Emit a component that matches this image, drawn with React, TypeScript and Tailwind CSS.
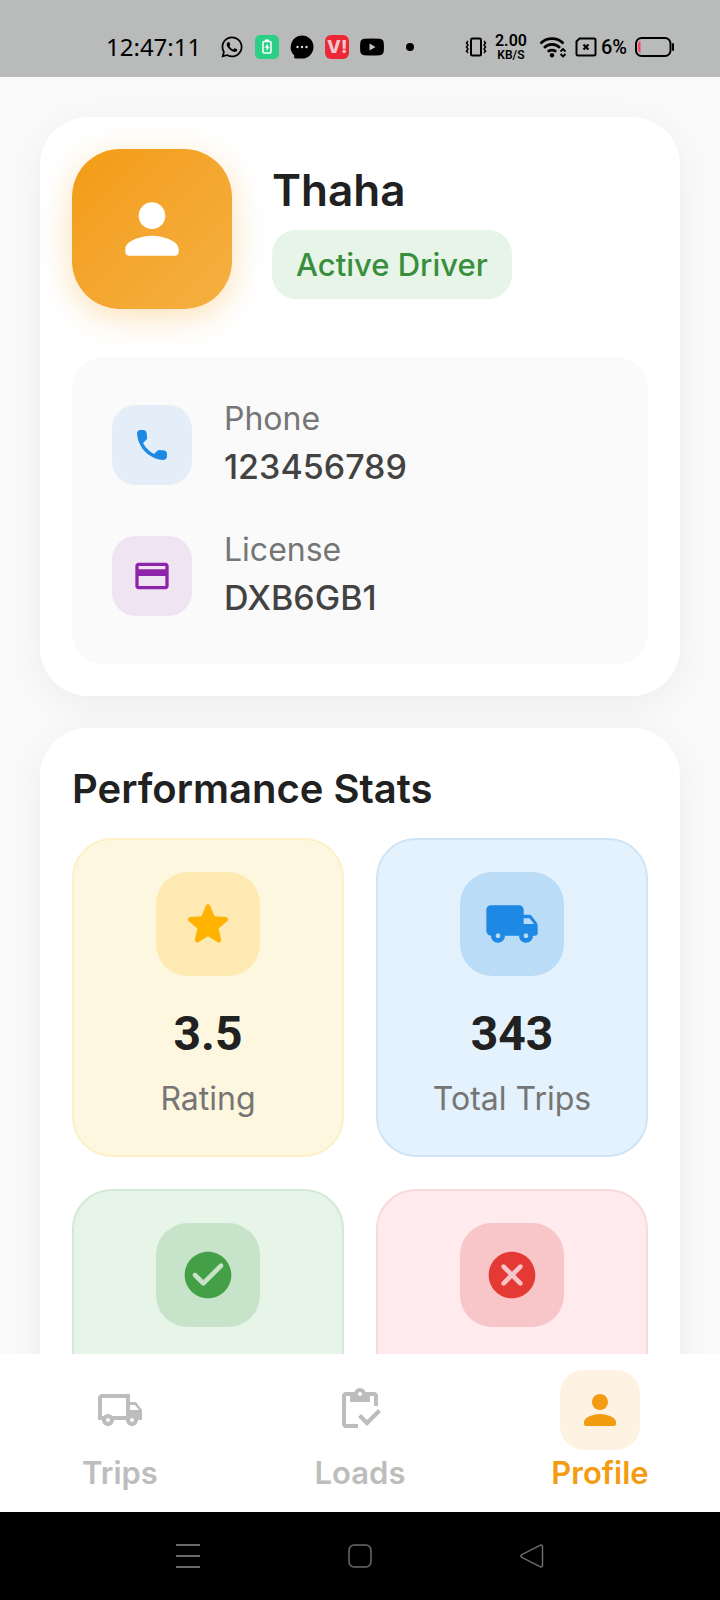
import type { ReactNode } from 'react';
import { FaWhatsapp } from 'react-icons/fa';
import { MdCreditCard, MdOutlineInventory, MdOutlineLocalShipping } from 'react-icons/md';

const ICONS = {
  person:
    'M12 12c2.21 0 4-1.79 4-4s-1.79-4-4-4-4 1.79-4 4 1.79 4 4 4zm0 2c-2.67 0-8 1.34-8 4v1c0 .55.45 1 1 1h14c.55 0 1-.45 1-1v-1c0-2.66-5.33-4-8-4z',
  phone:
    'M19.23 15.26l-2.54-.29c-.61-.07-1.21.14-1.64.57l-1.84 1.84c-2.83-1.44-5.15-3.75-6.59-6.59l1.85-1.85c.43-.43.64-1.03.57-1.64l-.29-2.52c-.12-1.01-.97-1.77-1.99-1.77H5.03c-1.13 0-2.07.94-2 2.07.53 8.54 7.36 15.36 15.89 15.89 1.13.07 2.07-.87 2.07-2v-1.73c.01-1.01-.75-1.86-1.76-1.98z',
  star:
    'M12 17.27l4.15 2.51c.76.46 1.69-.22 1.49-1.08l-1.1-4.72 3.67-3.18c.67-.58.31-1.68-.57-1.75l-4.83-.41-1.89-4.46c-.34-.81-1.5-.81-1.84 0L9.19 8.63l-4.83.41c-.88.07-1.24 1.17-.57 1.75l3.67 3.18-1.1 4.72c-.2.86.73 1.54 1.49 1.08l4.15-2.5z',
  truck:
    'M19.5 8H17V6c0-1.1-.9-2-2-2H3c-1.1 0-2 .9-2 2v9c0 1.1.9 2 2 2 0 1.66 1.34 3 3 3s3-1.34 3-3h6c0 1.66 1.34 3 3 3s3-1.34 3-3h1c.55 0 1-.45 1-1v-3.33c0-.43-.14-.85-.4-1.2L20.3 8.4c-.19-.25-.49-.4-.8-.4zM6 18c-.55 0-1-.45-1-1s.45-1 1-1 1 .45 1 1-.45 1-1 1zm13.5-8.5l1.96 2.5H17V9.5h2.5zM18 18c-.55 0-1-.45-1-1s.45-1 1-1 1 .45 1 1-.45 1-1 1z',
  check:
    'M12 2C6.48 2 2 6.48 2 12s4.48 10 10 10 10-4.48 10-10S17.52 2 12 2zM9.29 16.29L5.7 12.7c-.39-.39-.39-1.02 0-1.41.39-.39 1.02-.39 1.41 0L10 14.17l6.88-6.88c.39-.39 1.02-.39 1.41 0 .39.39.39 1.02 0 1.41l-7.59 7.59c-.38.39-1.02.39-1.41 0z',
  cancel:
    'M12 2C6.47 2 2 6.47 2 12s4.47 10 10 10 10-4.47 10-10S17.53 2 12 2zm4.3 14.3c-.39.39-1.02.39-1.41 0L12 13.41 9.11 16.3c-.39.39-1.02.39-1.41 0-.39-.39-.39-1.02 0-1.41L10.59 12 7.7 9.11c-.39-.39-.39-1.02 0-1.41.39-.39 1.02-.39 1.41 0L12 10.59l2.89-2.89c.39-.39 1.02-.39 1.41 0 .39.39.39 1.02 0 1.41L13.41 12l2.89 2.89c.38.38.38 1.02 0 1.41z',
};

function Icon({ name, className }: { name: keyof typeof ICONS; className: string }) {
  return (
    <svg viewBox="0 0 24 24" fill="currentColor" className={className} aria-hidden="true">
      <path d={ICONS[name]} />
    </svg>
  );
}

function StatusBar() {
  return (
    <header className="flex h-[77px] shrink-0 items-center justify-between bg-[#b9bbba] pt-4 pr-[45px] pl-[106px] text-black">
      <div className="flex items-center gap-[11px]">
        <span className="mr-2 font-['Noto_Sans',sans-serif] text-2xl leading-8">12:47:11</span>
        <FaWhatsapp className="size-6" />

        {/* Charging */}
        <svg viewBox="0 0 24 24" className="size-6">
          <rect width="24" height="24" rx="5" fill="#2bcf85" />
          <rect x="8" y="6.5" width="8" height="11.5" rx="1" fill="none" stroke="#fff" strokeWidth="1.5" />
          <path d="M10 4.5h4v2h-4zM12.8 8.5L9.6 12.8h2v3.2l3-4.4h-1.8z" fill="#fff" />
        </svg>

        {/* Messages */}
        <svg viewBox="0 0 24 24" className="size-6">
          <path d="M12 .5a11.5 11.5 0 1 1 0 23H5.500c-1.200 0-1.600-.8-1.400-1.900l.3-1.200A11.5 11.5 0 0 1 12 .5z" />
          <circle cx="7.5" cy="12" r="1.2" fill="#ddd" />
          <circle cx="12" cy="12" r="1.2" fill="#ddd" />
          <circle cx="16.5" cy="12" r="1.2" fill="#ddd" />
        </svg>

        <span className="flex size-6 items-center justify-center rounded-md bg-[#ee2737] font-['Inter',sans-serif] text-lg leading-6 font-extrabold text-[#f3c9cc]">
          V!
        </span>

        {/* Video */}
        <svg viewBox="0 0 24 24" className="size-6">
          <path d="M4 3.8Q12 3 20 3.8 23.3 4.2 23.7 7.5 24.2 12 23.7 16.5 23.3 19.8 20 20.2 12 21 4 20.2.7 19.8.3 16.5-.2 12 .3 7.5.7 4.2 4 3.8z" />
          <path d="M9.5 8.5v7l6-3.5z" fill="#c4c6c5" />
        </svg>

        <span className="ml-[11px] size-2 rounded-full bg-black" />
      </div>

      <div className="flex items-center gap-2">
        {/* Vibrate */}
        <svg viewBox="0 0 22 20" className="h-5 w-[22px]" fill="none" stroke="currentColor">
          <rect x="6" y="1.5" width="10" height="17" rx="1.5" strokeWidth="2" />
          <path d="M3 4l-1.5 2L3 8l-1.5 2L3 12l-1.5 2L3 16M19 4l1.5 2L19 8l1.5 2-1.5 2 1.5 2-1.5 2" strokeWidth="1.5" />
        </svg>
        <div className="text-center font-['Roboto',sans-serif] font-semibold">
          <div className="text-base leading-4">2.00</div>
          <div className="text-xs leading-3">KB/S</div>
        </div>

        {/* Wi-Fi */}
        <svg viewBox="0 0 28 22" className="ml-1 h-[22px] w-7" fill="none" stroke="currentColor">
          <path d="M1.5 7.5a16 16 0 0 1 23 0M5 11.8a11 11 0 0 1 16 0M8.8 15.8a6 6 0 0 1 8.4 0" strokeWidth="2.6" />
          <circle cx="13" cy="19.2" r="2.2" fill="currentColor" stroke="none" />
          <path d="M21.5 15.5l2.5-2.5 2.5 2.5M21.5 18l2.5 2.5 2.5-2.5" strokeWidth="1.8" />
        </svg>

        {/* No SIM */}
        <svg viewBox="0 0 22 20" className="h-5 w-[22px]" fill="none" stroke="currentColor" strokeWidth="2">
          <path d="M4.5 1.5H19A1.500 1.500 0 0 1 20.5 3v14a1.500 1.500 0 0 1-1.500 1.500H3A1.500 1.500 0 0 1 1.500 17V4.500z" />
          <path d="M8.5 7.5l5 5M13.5 7.5l-5 5" strokeWidth="2.2" />
        </svg>
        <span className="-ml-1 font-['Roboto',sans-serif] text-xl leading-6 font-medium">6%</span>

        {/* Battery */}
        <svg viewBox="0 0 40 20" className="h-5 w-10" fill="none">
          <rect x="1" y="1" width="34.5" height="18" rx="5.5" stroke="currentColor" strokeWidth="2" />
          <path d="M5 4.5v11a4 4 0 0 1-1.500-3V7.500a4 4 0 0 1 1.500-3z" fill="#f0475c" stroke="#f0475c" />
          <path d="M38 7v6" stroke="currentColor" strokeWidth="2" strokeLinecap="round" />
        </svg>
      </div>
    </header>
  );
}

function InfoRow({ label, value, tint, children }: { label: string; value: string; tint: string; children: ReactNode }) {
  return (
    <div className="flex items-center gap-8">
      <div className={`flex size-20 items-center justify-center rounded-3xl ${tint}`}>{children}</div>
      <div>
        <dt className="text-[32px] leading-[44px] text-[#757575]">{label}</dt>
        <dd className="text-[34px] leading-[52px] font-medium text-[#424242]">{value}</dd>
      </div>
    </div>
  );
}

type Stat = {
  icon: keyof typeof ICONS;
  card: string;
  tile: string;
  value?: string;
  label?: string;
};

const stats: Stat[] = [
  { icon: 'star', card: 'bg-[#fef7e0] border-[#fdefc8]', tile: 'bg-[#ffe9b3] text-[#ffb300]', value: '3.5', label: 'Rating' },
  { icon: 'truck', card: 'bg-[#e3f2fd] border-[#cfe4f7]', tile: 'bg-[#bbdcf7] text-[#1e88e5]', value: '343', label: 'Total Trips' },
  { icon: 'check', card: 'bg-[#e7f5e9] border-[#d3e9d5]', tile: 'bg-[#c7e3c9] text-[#43a047]' },
  { icon: 'cancel', card: 'bg-[#ffebee] border-[#f8d9dc]', tile: 'bg-[#f8c6c8] text-[#e53935]' },
];

function StatCard({ icon, card, tile, value, label }: Stat) {
  return (
    <div className={`flex min-h-[318px] flex-col items-center rounded-[40px] border-2 p-8 ${card}`}>
      <div className={`flex size-[104px] items-center justify-center rounded-[32px] ${tile}`}>
        <Icon name={icon} className="size-14" />
      </div>
      {value && <p className="mt-6 font-['Roboto',sans-serif] text-5xl leading-[67px] font-bold text-[#212121]">{value}</p>}
      {label && <p className="mt-2 text-[32px] leading-[48px] text-[#757575]">{label}</p>}
    </div>
  );
}

function NavItem({ label, active, children }: { label: string; active?: boolean; children: ReactNode }) {
  return (
    <a href="#" className={`flex flex-col items-center ${active ? 'text-[#f39c12]' : 'text-[#bdbdbd]'}`}>
      <span className={`flex size-20 items-center justify-center rounded-3xl ${active ? 'bg-[#fef3e3]' : ''}`}>
        {children}
      </span>
      <span className="text-[31px] leading-[46px] font-semibold">{label}</span>
    </a>
  );
}

export default function App() {
  return (
    <div className="flex h-screen flex-col bg-[#fafafa] font-['Inter',sans-serif]">
      <StatusBar />

      <main className="flex min-h-0 flex-1 flex-col gap-8 overflow-y-auto p-10 [scrollbar-width:none]">
        {/* Driver card */}
        <section className="shrink-0 rounded-[48px] bg-white p-8 shadow-[0_8px_40px_rgba(0,0,0,0.06)]">
          <div className="mb-12 flex items-center gap-10">
            <div className="flex size-40 items-center justify-center rounded-[48px] bg-gradient-to-br from-[#f39c12] to-[#f5b041] text-white shadow-[0_8px_32px_rgba(243,156,18,0.3)]">
              <Icon name="person" className="size-20" />
            </div>
            <div className="flex flex-col items-start gap-2">
              <h1 className="text-[44px] leading-[63px] font-semibold text-[#212121]">Thaha</h1>
              <span className="rounded-3xl bg-[#e7f4e8] px-6 py-3 text-[31px] leading-[45px] font-medium text-[#388e3c]">
                Active Driver
              </span>
            </div>
          </div>

          <dl className="flex flex-col gap-[35px] rounded-[32px] bg-[#fafafa] p-10">
            <InfoRow label="Phone" value="123456789" tint="bg-[#e3eef8] text-[#1e88e5]">
              <Icon name="phone" className="size-10" />
            </InfoRow>
            <InfoRow label="License" value="DXB6GB1" tint="bg-[#eee4f2] text-[#8e24aa]">
              <MdCreditCard className="size-10" />
            </InfoRow>
          </dl>
        </section>

        {/* Performance stats */}
        <section className="shrink-0 rounded-[48px] bg-white p-8 shadow-[0_8px_40px_rgba(0,0,0,0.06)]">
          <h2 className="mb-5 text-[40px] leading-[58px] font-semibold text-[#212121]">Performance Stats</h2>
          <div className="grid grid-cols-2 gap-8">
            {stats.map((stat) => (
              <StatCard key={stat.icon} {...stat} />
            ))}
          </div>
        </section>
      </main>

      <nav className="grid shrink-0 grid-cols-3 bg-white py-4">
        <NavItem label="Trips">
          <MdOutlineLocalShipping className="size-12" />
        </NavItem>
        <NavItem label="Loads">
          <MdOutlineInventory className="size-12" />
        </NavItem>
        <NavItem label="Profile" active>
          <Icon name="person" className="size-12" />
        </NavItem>
      </nav>

      {/* System navigation */}
      <footer className="flex h-[88px] shrink-0 items-center justify-center gap-[148px] bg-black text-[#6b6b6b]">
        <button type="button" aria-label="Recents">
          <svg viewBox="0 0 24 24" className="size-6" stroke="currentColor" strokeWidth="1.8">
            <path d="M0 1h24M0 12h24M0 23h24" />
          </svg>
        </button>
        <button type="button" aria-label="Home">
          <svg viewBox="0 0 24 24" className="size-6" fill="none" stroke="currentColor" strokeWidth="1.5">
            <rect x="1" y="1" width="22" height="22" rx="5" />
          </svg>
        </button>
        <button type="button" aria-label="Back">
          <svg viewBox="0 0 24 24" className="size-6" fill="none" stroke="currentColor" strokeWidth="1.5">
            <path d="M20.5 1.2L1.8 10.6q-2 1.4 0 2.8L20.5 22.8q2 .6 2-1.500V2.700q0-2.100-2-1.500z" />
          </svg>
        </button>
      </footer>
    </div>
  );
}
